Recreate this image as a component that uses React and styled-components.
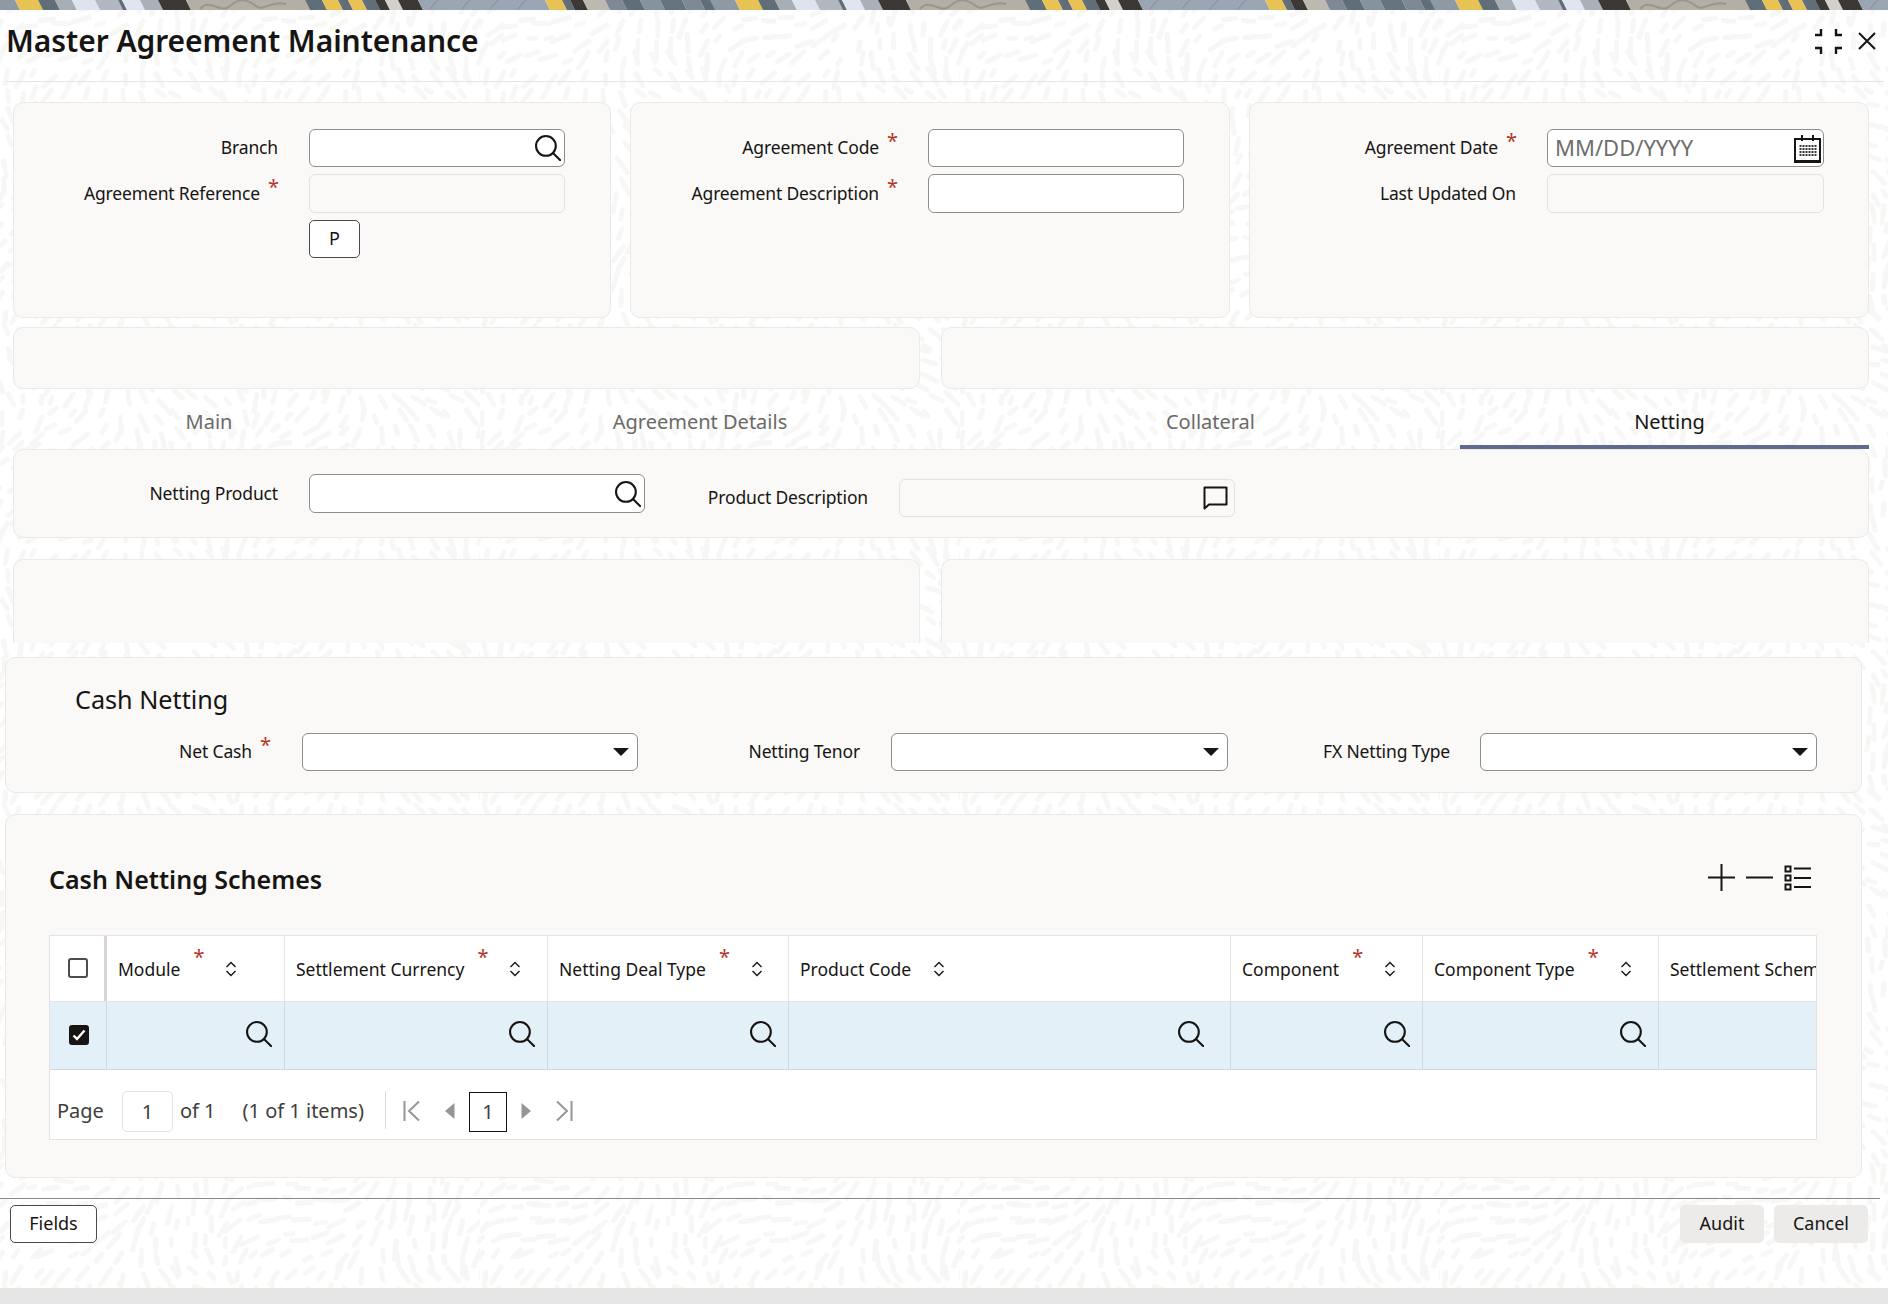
import { styled, createGlobalStyle } from "styled-components";

const FONT = `"Noto Sans", "Open Sans", "Liberation Sans", sans-serif`;

// pale rice-grain texture behind the whole page, built once as a vector tile
const buildTexture = () => {
  const size = 480;
  let seed = 7;
  const rnd = () => {
    seed = (seed * 16807) % 2147483647;
    return seed / 2147483647;
  };
  let marks = "";
  for (let y = 0; y < size; y += 17) {
    for (let x = 0; x < size; x += 17) {
      const px = x + rnd() * 9;
      const py = y + rnd() * 9;
      const angle =
        Math.sin((x / size) * Math.PI * 4) * 45 + Math.cos((y / size) * Math.PI * 4) * 40 + 90 + rnd() * 22;
      const len = 6 + rnd() * 13;
      const dx = (Math.cos((angle * Math.PI) / 180) * len).toFixed(1);
      const dy = (Math.sin((angle * Math.PI) / 180) * len).toFixed(1);
      marks += `<path d='M${px.toFixed(1)} ${py.toFixed(1)}l${dx} ${dy}'/>`;
    }
  }
  const svg = `<svg xmlns='http://www.w3.org/2000/svg' width='${size}' height='${size}'><g stroke='#f7f7f6' stroke-width='5' stroke-linecap='round' fill='none'>${marks}</g></svg>`;
  return `url("data:image/svg+xml,${encodeURIComponent(svg)}")`;
};

const GlobalStyle = createGlobalStyle`
  html, body { margin: 0; padding: 0; background: #fff; }
  body { font-family: ${FONT}; color: #161513; }
  * { box-sizing: border-box; }
`;

const Page = styled.div`
  width: 1888px;
  height: 1307px;
  overflow: hidden;
  background-color: #fff;
`;
const Canvas = styled.div`
  height: 1288px;
  background-image: ${buildTexture()};
`;
const BottomBand = styled.div`
  height: 16px;
  background: #e6e6e5;
`;

const BannerSvg = styled.svg`
  display: block;
  width: 1888px;
  height: 10px;
`;

const Header = styled.header`
  height: 72px;
  margin: 0 4px 0 6px;
  border-bottom: 1px solid #e6e5e3;
  display: flex;
  justify-content: space-between;
`;
const Title = styled.h1`
  margin: 0;
  font-size: 30px;
  font-weight: 600;
  line-height: 62px;
  letter-spacing: -0.05px;
`;
const WindowTools = styled.div`
  display: flex;
  align-items: center;
  gap: 15px;
  height: 62px;
  padding-right: 8px;
`;

const Card = styled.section`
  background: #faf9f7;
  border: 1px solid #eceae8;
  border-radius: 10px;
`;
const CardRow = styled.div`
  display: grid;
  grid-template-columns: ${(p) => p.$cols};
  gap: ${(p) => p.$gap}px;
  margin: ${(p) => p.$top}px 0 0 13px;
  width: 1856px;
  height: ${(p) => p.$height}px;
`;
const FormCard = styled(Card)`
  padding-top: 26px;
  display: flex;
  flex-direction: column;
  gap: 7px;
`;
const ClippedCard = styled(Card)`
  border-bottom: 0;
  border-radius: 10px 10px 0 0;
`;

const Field = styled.div`
  display: flex;
  align-items: center;
  margin-top: ${(p) => p.$top || 0}px;
`;
const Label = styled.label`
  width: ${(p) => p.$width}px;
  flex: none;
  margin-right: ${(p) => p.$gap || 31}px;
  padding-bottom: 2px;
  display: flex;
  justify-content: flex-end;
  font-size: 17.5px;
  letter-spacing: -0.15px;
  line-height: 24px;
  white-space: nowrap;
`;
const Star = styled.span`
  width: 18px;
  flex: none;
  padding-left: 8px;
  margin-top: -4px;
  height: 18px;
  font-size: 20px;
  line-height: 20px;
  color: #b3352a;
`;
const Input = styled.div`
  width: ${(p) => p.$width}px;
  height: ${(p) => p.$height || 38}px;
  flex: none;
  display: flex;
  align-items: center;
  justify-content: flex-end;
  padding-right: ${(p) => p.$pad ?? 3}px;
  background: ${(p) => (p.$disabled ? "#faf9f7" : "#fff")};
  border: 1px solid ${(p) => (p.$disabled ? "#e3e2df" : "#8f8d8a")};
  border-radius: 6px;
`;
const Placeholder = styled.span`
  margin-right: auto;
  padding: 0 0 2px 7px;
  font-size: 22px;
  color: #6f6e6b;
`;
const PRow = styled.div`
  margin-left: 295px;
`;
const OutlineButton = styled.button`
  width: ${(p) => p.$width}px;
  height: 38px;
  padding: 0 0 2px;
  background: #fff;
  border: 1px solid #4a4947;
  border-radius: 5px;
  font-family: ${FONT};
  font-size: 18px;
  color: #161513;
`;

const Tabs = styled.nav`
  display: flex;
  margin-left: 13px;
  width: 1856px;
  height: 60px;
`;
const Tab = styled.div`
  width: ${(p) => p.$width}px;
  padding: 10px ${(p) => p.$right || 0}px 0 ${(p) => p.$left || 0}px;
  text-align: center;
  font-size: 20px;
  line-height: 46px;
  color: ${(p) => (p.$active ? "#161513" : "#6b6a67")};
  border-bottom: 4px solid ${(p) => (p.$active ? "#5f6a8c" : "transparent")};
`;

const NettingCard = styled(Card)`
  margin-left: 13px;
  width: 1856px;
  height: 89px;
  padding-top: 24px;
  display: flex;
  align-items: flex-start;
`;

const Panel = styled(Card)`
  margin: ${(p) => p.$top}px 0 0 5px;
  width: 1857px;
  height: ${(p) => p.$height}px;
`;
const CashHeading = styled.h2`
  margin: 0;
  padding: 21px 0 0 69px;
  height: 75px;
  font-size: 25.2px;
  font-weight: 400;
  line-height: 40px;
`;
const CashRow = styled.div`
  display: flex;
`;
const Caret = styled.span`
  width: 0;
  height: 0;
  margin: 0 5px 1px 0;
  border-left: 8px solid transparent;
  border-right: 8px solid transparent;
  border-top: 8px solid #161513;
`;

const SchemesHead = styled.div`
  display: flex;
  justify-content: space-between;
  align-items: center;
  height: 120px;
  padding: 7px 50px 0 43px;
`;
const SchemesTitle = styled.h2`
  margin: 0;
  font-size: 25px;
  font-weight: 600;
  line-height: 40px;
`;
const TableTools = styled.div`
  display: flex;
  align-items: center;
  gap: 11px;
  padding-bottom: 2px;
`;

const Table = styled.div`
  margin-left: 43px;
  width: 1768px;
  height: 205px;
  background: #fff;
  border: 1px solid #e4e3e1;
  overflow: hidden;
`;
const Row = styled.div`
  display: flex;
  height: ${(p) => p.$height}px;
  background: ${(p) => p.$bg || "#fff"};
  border-bottom: 1px solid ${(p) => p.$line};
`;
const Cell = styled.div`
  width: ${(p) => p.$width}px;
  flex: none;
  display: flex;
  align-items: center;
  border-right: ${(p) => (p.$thick ? 3 : 1)}px solid ${(p) => p.$line};
  &:last-child { border-right: 0; }
`;
const HeadCell = styled(Cell)`
  padding-left: 11px;
  font-size: 17.5px;
  white-space: nowrap;
  overflow: hidden;
`;
const CheckCell = styled(Cell)`
  justify-content: center;
  padding-left: 1px;
`;
const SearchCell = styled(Cell)`
  justify-content: flex-end;
  padding: 0 ${(p) => p.$pad}px 3px 0;
`;
const HeadStar = styled.span`
  align-self: flex-start;
  width: 12px;
  margin: 11px 0 0 13px;
  font-size: 20px;
  line-height: 20px;
  color: #b3352a;
`;
const SortSlot = styled.span`
  display: flex;
  margin-left: ${(p) => p.$gap}px;
`;
const Check = styled.span`
  width: 20px;
  height: 20px;
  margin-bottom: 2px;
  border-radius: 3px;
  display: flex;
  align-items: center;
  justify-content: center;
  background: ${(p) => (p.$on ? "#161513" : "#fff")};
  border: 2px solid ${(p) => (p.$on ? "#161513" : "#4d4c4a")};
`;

const Pager = styled.div`
  display: flex;
  align-items: center;
  height: 70px;
  padding: 10px 0 0 7px;
  font-size: 20px;
  color: #3f3e3c;
`;
const PageInput = styled.span`
  width: 51px;
  height: 41px;
  margin: 3px 7px 0 18px;
  display: flex;
  align-items: center;
  justify-content: center;
  background: #fff;
  border: 1px solid #e3e2df;
  border-radius: 5px;
`;
const ItemCount = styled.span`
  margin-left: 27px;
`;
const PagerSep = styled.span`
  width: 1px;
  height: 38px;
  margin: 0 17px 0 21px;
  background: #dcdbd8;
`;
const PageNumber = styled.span`
  width: 38px;
  height: 40px;
  margin: 3px 14px 0;
  display: flex;
  align-items: center;
  justify-content: center;
  border: 1.5px solid #161513;
`;
const PagerIcon = styled.svg`
  display: block;
  flex: none;
  margin: ${(p) => p.$margin || "2px 0 0"};
`;

const Footer = styled.footer`
  margin-top: 20px;
  width: 1880px;
  height: 46px;
  border-top: 1.5px solid #8a8988;
  padding: 6px 12px 0 10px;
  display: flex;
  align-items: flex-start;
`;
const FooterRight = styled.div`
  margin-left: auto;
  display: flex;
  gap: 10px;
`;
const GhostButton = styled.button`
  width: ${(p) => p.$width}px;
  height: 38px;
  padding: 0 0 2px;
  border: 0;
  border-radius: 5px;
  background: #ecebe9;
  font-family: ${FONT};
  font-size: 18px;
  color: #161513;
`;

const SearchIcon = () => (
  <svg width="26" height="26" viewBox="0 0 25 25" fill="none" stroke="#161513" strokeWidth="2">
    <circle cx="10.5" cy="10.5" r="9.5" />
    <path d="M17.5 17.5l7 7" strokeLinecap="round" />
  </svg>
);

const Sort = () => (
  <svg width="12" height="16" viewBox="0 0 12 16" fill="none" stroke="#161513" strokeWidth="1.4">
    <path d="M1.5 6L6 1.5 10.5 6M1.5 10L6 14.5 10.5 10" />
  </svg>
);

const CalendarIcon = () => {
  const dots = [];
  for (let r = 0; r < 4; r++) {
    for (let c = 0; c < 6; c++) {
      dots.push(<rect key={`${r}-${c}`} x={6.5 + c * 3} y={11 + r * 3} width="2" height="2" />);
    }
  }
  return (
    <svg width="29" height="29" viewBox="0 0 29 29" fill="#3a3937">
      <path d="M2 5h25v22.5H2z" fill="none" stroke="#161513" strokeWidth="2" />
      <path d="M1 26h27v3H1zM8 1h2v6H8zM19 1h2v6h-2z" fill="#161513" />
      {dots}
    </svg>
  );
};

const Stripe = ({ x0, x1, fill }) => (
  <polygon points={`${x0},0 ${x1},0 ${x1 + 5},10 ${x0 + 5},10`} fill={fill} />
);

const STRIPES = [
  [-10, 15, "#8d9aa5"], [15, 38, "#e8c255"], [38, 55, "#5f6e78"], [55, 72, "#a6aeb6"],
  [72, 95, "#dde4ef"], [95, 118, "#b1b7bf"], [118, 122, "#5f6e78"], [122, 140, "#dfe6f1"],
  [140, 158, "#a9b0b8"], [158, 186, "#3b3835"], [186, 305, "#b5aea5"], [305, 322, "#5f6e78"],
  [322, 338, "#e8c255"], [338, 348, "#5f6e78"], [348, 362, "#e8c255"], [362, 375, "#5f6e78"],
  [375, 385, "#3b3835"], [385, 398, "#d4d0c8"], [398, 418, "#3b3835"], [418, 545, "#9aa6b4"],
  [545, 562, "#e8c255"], [562, 570, "#5f6e78"], [570, 583, "#3b3835"], [583, 605, "#bdb8b0"],
  [605, 622, "#7d8a96"], [622, 640, "#5f6e78"], [640, 660, "#8592a0"], [660, 682, "#66747f"],
  [682, 700, "#7d8a96"], [700, 720, "#5f6e78"],
];

const BannerTile = ({ offset }) => (
  <g transform={`translate(${offset} 0)`}>
    {STRIPES.map(([a, b, c]) => (
      <Stripe key={a} x0={a} x1={b} fill={c} />
    ))}
    <path d="M200 9c10-12 20 6 30-3s18-6 26 0 14-6 30-2" fill="none" stroke="#9b948b" strokeWidth="2" />
    <path d="M430 9l8-9M462 9l8-9M490 9l8-9M518 9l8-9" stroke="#7f8b99" strokeWidth="1" />
  </g>
);

const Banner = () => (
  <BannerSvg viewBox="0 0 1888 10">
    {[0, 720, 1440].map((o) => (
      <BannerTile key={o} offset={o} />
    ))}
  </BannerSvg>
);

const HEAD_LINE = "#e2e4e5";
const ROW_LINE = "#cfd9e0";
const COLUMNS = [
  { name: "Module", width: 178, star: true, pad: 12 },
  { name: "Settlement Currency", width: 263, star: true, pad: 12 },
  { name: "Netting Deal Type", width: 241, star: true, pad: 12 },
  { name: "Product Code", width: 442, pad: 26 },
  { name: "Component", width: 192, star: true, pad: 12 },
  { name: "Component Type", width: 236, star: true, pad: 12 },
];

function CardField({ label, star, width, gap, inputWidth, disabled, children, height, pad }) {
  return (
    <Field>
      <Label $width={width} $gap={gap}>
        {label}
        {star && <Star>*</Star>}
      </Label>
      <Input $width={inputWidth} $disabled={disabled} $height={height} $pad={pad}>
        {children}
      </Input>
    </Field>
  );
}

function SelectField({ label, star, width, gap, inputWidth }) {
  return (
    <CardField label={label} star={star} width={width} gap={gap} inputWidth={inputWidth} height={38}>
      <Caret />
    </CardField>
  );
}

export default function App() {
  return (
    <Page>
      <GlobalStyle />
      <Canvas>
        <Banner />
        <Header>
          <Title>Master Agreement Maintenance</Title>
          <WindowTools>
            <svg width="29" height="27" viewBox="0 0 29 27" fill="none" stroke="#161513" strokeWidth="2.4">
              <path d="M1 7h6V1M28 7h-6V1M1 20h6v6M28 20h-6v6" />
            </svg>
            <svg width="18" height="18" viewBox="0 0 18 18" fill="none" stroke="#161513" strokeWidth="2">
              <path d="M1 1l16 16M17 1L1 17" />
            </svg>
          </WindowTools>
        </Header>

        <CardRow $top={20} $height={216} $gap={19} $cols="598px 600px 620px">
          <FormCard>
            <CardField label="Branch" width={264} inputWidth={256}>
              <SearchIcon />
            </CardField>
            <CardField label="Agreement Reference" star width={264} inputWidth={256} disabled height={39} />
            <PRow>
              <OutlineButton $width={51}>P</OutlineButton>
            </PRow>
          </FormCard>
          <FormCard>
            <CardField label="Agreement Code" star width={266} inputWidth={256} />
            <CardField label="Agreement Description" star width={266} inputWidth={256} height={39} />
          </FormCard>
          <FormCard>
            <CardField label="Agreement Date" star width={266} inputWidth={277} pad={1}>
              <Placeholder>MM/DD/YYYY</Placeholder>
              <CalendarIcon />
            </CardField>
            <CardField label="Last Updated On" width={266} inputWidth={277} disabled height={39} />
          </FormCard>
        </CardRow>

        <CardRow $top={9} $height={62} $gap={21} $cols="907px 928px">
          <Card />
          <Card />
        </CardRow>

        <Tabs>
          <Tab $width={426} $right={34}>Main</Tab>
          <Tab $width={522}>Agreement Details</Tab>
          <Tab $width={499}>Collateral</Tab>
          <Tab $width={409} $active $left={10}>Netting</Tab>
        </Tabs>

        <NettingCard>
          <CardField label="Netting Product" width={264} inputWidth={336} height={39}>
            <SearchIcon />
          </CardField>
          <Field $top={5}>
            <Label $width={223}>Product Description</Label>
            <Input $width={336} $disabled $pad={6}>
              <svg width="25" height="24" viewBox="0 0 25 24" fill="none" stroke="#161513" strokeWidth="2">
                <path d="M1.5 22.5V1.5h22v17H6z" strokeLinejoin="round" />
              </svg>
            </Input>
          </Field>
        </NettingCard>

        <CardRow $top={21} $height={84} $gap={21} $cols="907px 928px">
          <ClippedCard />
          <ClippedCard />
        </CardRow>

        <Panel $top={14} $height={136}>
          <CashHeading>Cash Netting</CashHeading>
          <CashRow>
            <SelectField label="Net Cash" star width={264} gap={32} inputWidth={336} />
            <SelectField label="Netting Tenor" width={222} inputWidth={337} />
            <SelectField label="FX Netting Type" width={222} gap={30} inputWidth={337} />
          </CashRow>
        </Panel>

        <Panel $top={21} $height={364}>
          <SchemesHead>
            <SchemesTitle>Cash Netting Schemes</SchemesTitle>
            <TableTools>
              <svg width="27" height="27" viewBox="0 0 27 27" stroke="#161513" strokeWidth="2">
                <path d="M13.5 0v27M0 13.5h27" />
              </svg>
              <svg width="27" height="27" viewBox="0 0 27 27" stroke="#161513" strokeWidth="2">
                <path d="M0 13.5h27" />
              </svg>
              <svg width="27" height="26" viewBox="0 0 27 26" fill="none" stroke="#161513" strokeWidth="2">
                <path d="M1.5 1.5h5v5h-5zM1.5 10.5h5v5h-5zM1.5 19.5h5v5h-5z" />
                <path d="M10 3.5h17M10 13h17M10 22h17" />
              </svg>
            </TableTools>
          </SchemesHead>

          <Table>
            <Row $height={66} $line={HEAD_LINE}>
              <CheckCell $width={57} $line="#d6d5d3" $thick>
                <Check />
              </CheckCell>
              {COLUMNS.map((c) => (
                <HeadCell key={c.name} $width={c.width} $line={HEAD_LINE}>
                  {c.name}
                  {c.star && <HeadStar>*</HeadStar>}
                  <SortSlot $gap={c.star ? 20 : 22}>
                    <Sort />
                  </SortSlot>
                </HeadCell>
              ))}
              <HeadCell $width={160} $line={HEAD_LINE}>Settlement Scheme</HeadCell>
            </Row>
            <Row $height={68} $bg="#e3f0f7" $line={ROW_LINE}>
              <CheckCell $width={57} $line={ROW_LINE}>
                <Check $on>
                  <svg width="14" height="12" viewBox="0 0 14 12" fill="none" stroke="#fff" strokeWidth="2.4">
                    <path d="M1.5 6.5L5 10l7.5-8.5" />
                  </svg>
                </Check>
              </CheckCell>
              {COLUMNS.map((c) => (
                <SearchCell key={c.name} $width={c.width} $line={ROW_LINE} $pad={c.pad}>
                  <SearchIcon />
                </SearchCell>
              ))}
              <Cell $width={160} $line={ROW_LINE} />
            </Row>
            <Pager>
              Page
              <PageInput>1</PageInput>
              of 1
              <ItemCount>(1 of 1 items)</ItemCount>
              <PagerSep />
              <PagerIcon width="18" height="22" viewBox="0 0 18 22" fill="none" stroke="#979694" strokeWidth="2">
                <path d="M1.5 1v20M16 1.5L6 11l10 9.5" />
              </PagerIcon>
              <PagerIcon $margin="2px 0 0 24px" width="10" height="16" viewBox="0 0 10 16" fill="#979694">
                <path d="M9.5 0v16L0 8z" />
              </PagerIcon>
              <PageNumber>1</PageNumber>
              <PagerIcon width="10" height="16" viewBox="0 0 10 16" fill="#979694">
                <path d="M.5 0v16L10 8z" />
              </PagerIcon>
              <PagerIcon $margin="2px 0 0 24px" width="18" height="22" viewBox="0 0 18 22" fill="none" stroke="#979694" strokeWidth="2">
                <path d="M16.5 1v20M2 1.5L12 11 2 20.5" />
              </PagerIcon>
            </Pager>
          </Table>
        </Panel>

        <Footer>
          <OutlineButton $width={87}>Fields</OutlineButton>
          <FooterRight>
            <GhostButton $width={84}>Audit</GhostButton>
            <GhostButton $width={94}>Cancel</GhostButton>
          </FooterRight>
        </Footer>
      </Canvas>
      <BottomBand />
    </Page>
  );
}
